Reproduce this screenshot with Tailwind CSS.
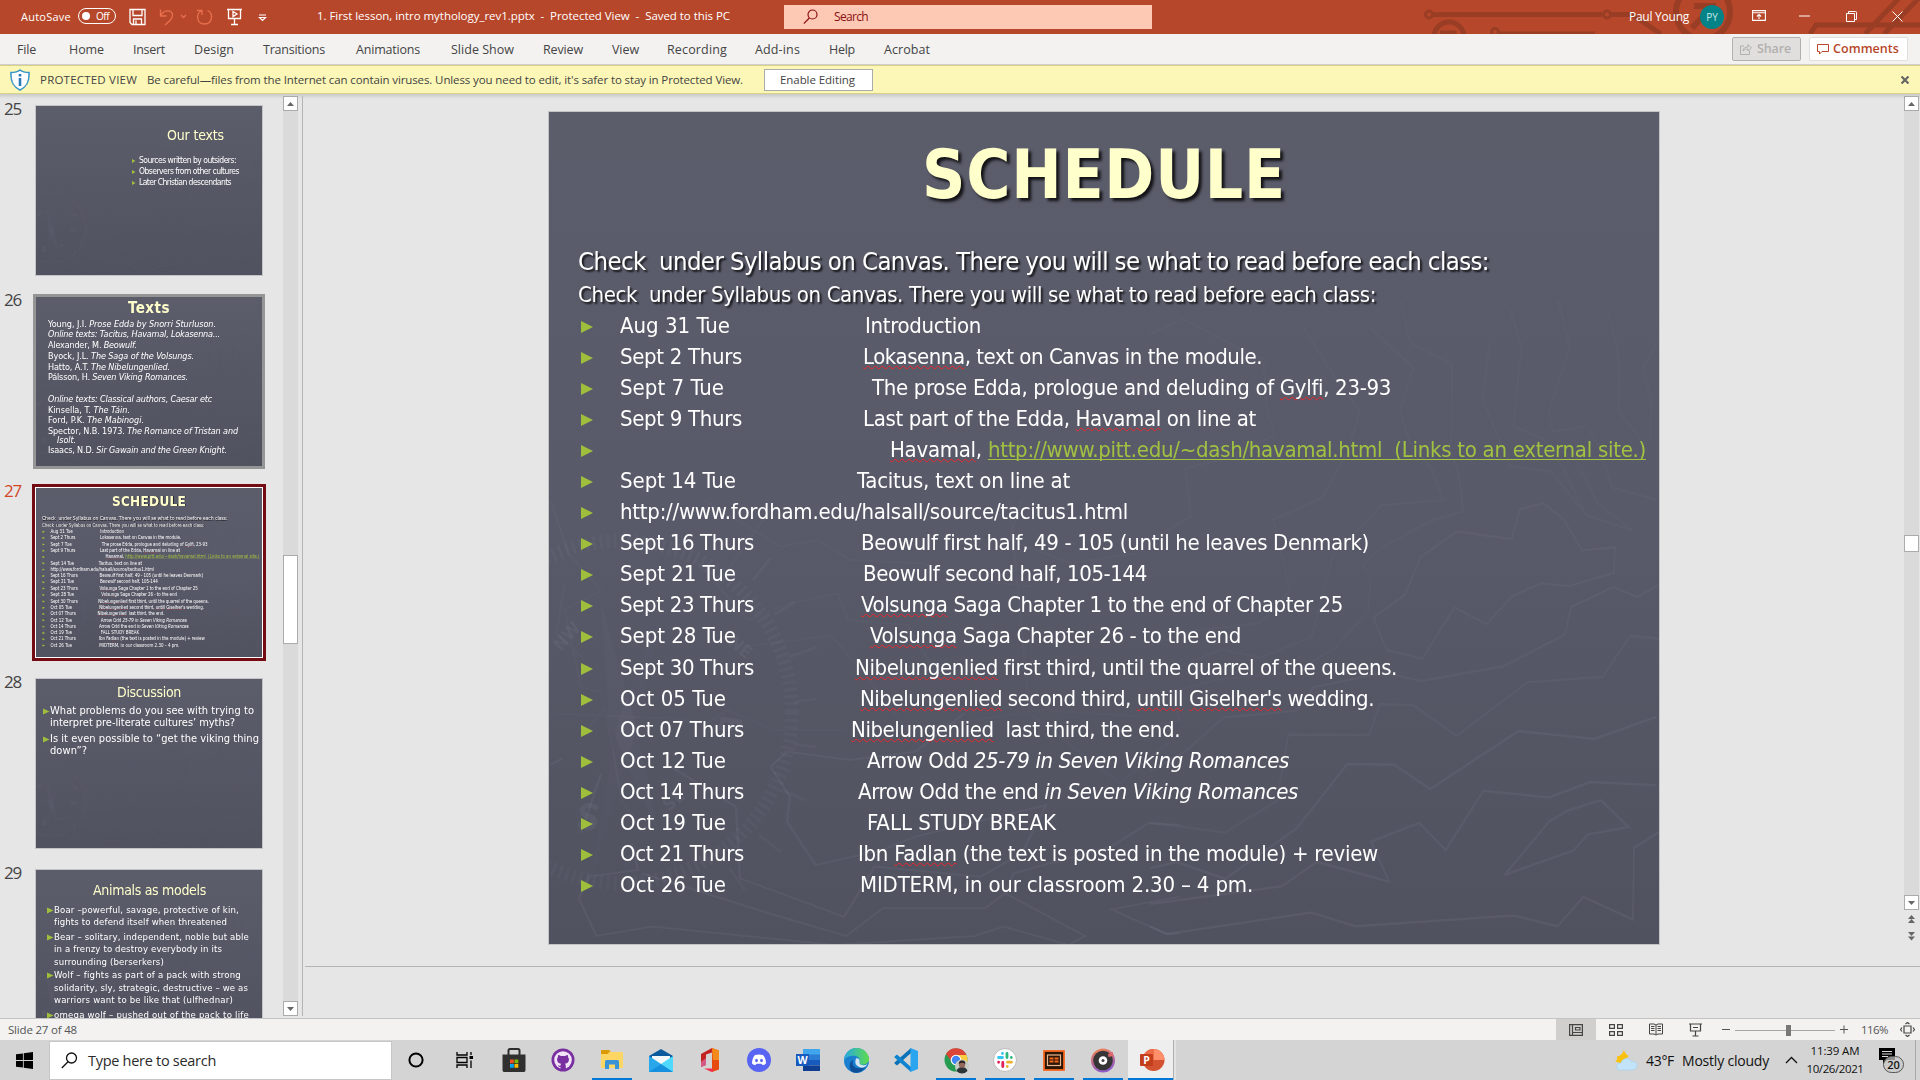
<!DOCTYPE html>
<html lang="en">
<head>
<meta charset="utf-8">
<title>1. First lesson, intro mythology_rev1.pptx</title>
<script src="https://cdn.jsdelivr.net/npm/@tailwindcss/browser@4"></script>
</head>
<body class="w-[1920px] h-[1080px] overflow-hidden flex flex-col bg-[#e6e6e6] font-['Open_Sans','Noto_Sans',sans-serif] text-[12px] text-[#444] whitespace-nowrap">

<!-- shared terrain artwork for every slide -->
<svg class="hidden">
  <symbol id="terrain" viewBox="0 0 1110 832">
    <g fill="none" stroke="#8c8ea4" stroke-width="3" opacity=".62">
      <g transform="translate(601 188) scale(.3333 .4209)" stroke-width="6">
        <g opacity=".1">
        <path d="M0 80L100 45L160 70L300 130L340 140L350 260L375 320L250 370L105 400L122 515L0 570"/>
        <path d="M460 65L560 190L630 265L590 365L515 470L370 522L420 690L330 768L130 785L0 820"/>
        <path d="M660 65L790 160L750 260L780 340L845 400L880 475L695 487L620 550L550 605L485 800L330 850L215 830L0 900"/>
        <path d="M750 0L780 100L905 152L908 300L900 350L928 420L940 502L850 522L700 585L638 630L662 662L655 740L550 830L430 885L220 900L60 930L90 1000L0 1010"/>
        <path d="M1080 20L1115 110L1090 300L1180 330L1240 400L1310 512L1450 548L1345 485L1290 400M1020 100L998 235L1080 395L1205 408L1310 512"/>
        <path d="M1225 0L1260 115L1195 265L1210 312L1310 300L1350 350L1385 445L1520 475M1375 30L1405 120L1408 265L1470 330M1528 90L1480 160L1503 240L1500 330"/>
        </g>
        <g opacity=".15">
        <path d="M710 832L670 755L765 700L812 610L920 550L1085 568L1110 497L1180 483L1240 520L1297 595L1395 587L1392 648L1255 680L1175 673L1087 703L1010 770L913 730L817 852Z"/>
        <path d="M1528 675L1462 706L1390 682L1263 730L1245 795L1060 870L812 905L700 885L490 920L440 975L220 992L110 1070L0 1120"/>
        <path d="M1528 805L1440 798L1358 895L1132 908L920 1036L790 963L690 960L658 1033L415 1032L380 1190L225 1265L0 1242"/>
        </g>
        <g opacity=".22">
        <path d="M1520 990L1333 1043L1105 1024L840 1162L733 1104L592 1102L440 1255L225 1375L80 1335L0 1350"/>
        <path d="M1520 1153L1320 1145L1197 1182L1000 1166L887 1307L807 1242L663 1287L718 1382L500 1335L395 1393L0 1435"/>
        <path d="M1352 1188L1435 1252L1313 1270L1270 1308L1063 1366L1200 1237L1250 1214ZM1528 1263L1452 1302L1449 1472L1300 1418L1222 1488L1090 1462L617 1488L483 1455L50 1506L0 1488"/>
        </g>
      </g>
      <g transform="translate(-9 388) scale(.4082 .3333)" stroke-width="6">
        <g opacity=".1">
        <path d="M25 0L70 160L150 270L60 330L100 560L155 580M400 0L590 140L680 120L760 180L940 190L1060 240L1210 260M380 180L510 360L610 310L730 280L755 360L900 375L980 540"/>
        <path d="M490 440L715 408L820 560L900 690L1230 630L1480 650M300 650L410 670L460 630L570 690L750 690M25 640L300 655M1150 0L1200 640L1420 850L1568 700"/>
        <path d="M430 260L570 20M1180 0L1150 120L1300 190L1460 160M60 250L40 400L110 480M110 700L160 620L200 900L250 1000"/>
        </g>
        <g opacity=".2">
        <path d="M25 795L55 775M605 755L760 780L920 755L1040 640M565 800L612 890L605 965L675 1095L840 1050M565 800L605 755M480 920L490 1135L745 1250L820 1100L1080 1130L1180 1060L1240 915L920 1010L840 1050"/>
        <path d="M250 1120L560 1240L750 1308L840 1225L1090 1225L1140 1180L1335 1308L1295 1335L1135 1280L1065 1308L720 1335L275 1280L138 1308L95 1195L120 1130L240 1110L225 1030"/>
        <path d="M1568 1190L1400 1228L1535 1302L1568 1300M1140 1180L1160 1120L1400 1040L1490 970L1568 975M150 820L100 1000M320 800L480 920"/>
        </g>
      </g>
      <circle cx="72" cy="600" r="171" stroke-width="14" stroke-dasharray="3 4" opacity=".14"/>
      <path d="M225 503L246 490M240 545L268 535M245 590L268 587M244 632L268 635M232 678L256 688M210 723L232 740M180 756L196 778M204 468L222 446" opacity=".14"/>
      <path d="M52 490L84 602L110 722L60 612Z" fill="#8c8ea4" stroke="none" opacity=".1"/>
      <path d="M112 500L90 610L38 780L70 605Z" fill="#8c8ea4" stroke="none" opacity=".06"/>
    </g>
    <g fill="#8c8ea4" opacity=".13" font-family="DejaVu Sans" font-weight="bold">
      <text x="26" y="716" font-size="36" transform="rotate(8 26 716)">S</text>
      <text x="172" y="602" font-size="30" transform="rotate(98 172 602)">E</text>
      <text x="12" y="540" font-size="18" transform="rotate(-48 12 540)">NW</text>
      <text x="120" y="700" font-size="18" transform="rotate(-40 120 700)">SE</text>
      <text x="178" y="532" font-size="18" transform="rotate(40 178 532)">NE</text>
    </g>
  </symbol>
</svg>

<!-- title bar -->
<header class="relative h-[34px] shrink-0 bg-[#b7472a] text-white flex items-center">
  <svg class="absolute right-0 top-0" width="500" height="34" fill="none" stroke="#9a3d25" stroke-width="5">
    <circle cx="9" cy="14.500" r="3.500" stroke-width="3"/><path d="M13 14.500H182"/><circle cx="187" cy="14.500" r="3.500" stroke-width="3"/><path d="M191 14.500H212L241 34"/>
    <circle cx="29" cy="37" r="15"/><path d="M20 33H34V40" /><circle cx="75" cy="32" r="3.500" stroke-width="3"/><path d="M79 34H175"/>
    <circle cx="283" cy="12" r="27" stroke-width="6"/><path d="M274 6H293V26M293 6L272 28" stroke-width="6"/>
    <path d="M390 34L396 25H500M445 34L480 -3M464 34L500 -3"/>
  </svg>
  <div class="relative flex items-center w-full h-full">
    <span class="ml-[21px] w-[50px] text-[11px]"><span data-w="50">AutoSave</span></span>
    <span class="ml-[7px] mb-[2px] w-[38px] h-[16px] rounded-full border border-white flex items-center pl-[3px] gap-[6px] text-[10px]"><i class="size-[8px] rounded-full bg-white"></i><span data-w="13">Off</span></span>
    <svg class="ml-[13px]" width="17" height="18" fill="none" stroke="#fff" stroke-width="1.300"><path d="M1 1.500H16V16.500H3L1 14.500ZM4 2V7.500H13V2M4.500 16V11H12.500V16M7 12.500V16"/></svg>
    <svg class="ml-[13px]" width="28" height="18" fill="none" stroke="#e8704f" stroke-width="1.300"><path d="M1.500 1.500V8H7.500M1.800 7.500C5 1.500 13 1.500 13.500 7C14 11 9 14 6 17M22 7L24.500 9.500L27 7"/></svg>
    <svg class="ml-[9px]" width="18" height="18" fill="none" stroke="#e8704f" stroke-width="1.300"><path d="M1 2.500H6V7M5.500 3C0 5 0 16 8.500 16C17 16 17.500 5 11.500 2.500"/></svg>
    <svg class="ml-[13px]" width="16" height="18" fill="none" stroke="#fff" stroke-width="1.300"><path d="M0 1.500H15M1.500 1.500V10.500H13.500V1.500M7.500 10.500V16.500M4 16.500H11"/><path d="M6 3.500L10 6L6 8.500Z"/></svg>
    <svg class="ml-[15px]" width="9" height="9" fill="none" stroke="#fff" stroke-width="1.200"><path d="M1 2H8M1.500 4.500L4.500 7.500L7.500 4.500Z"/></svg>
    <span class="ml-[50px] mb-[3px] w-[413px] whitespace-pre text-[11.500px]"><span data-w="413">1. First lesson, intro mythology_rev1.pptx  -  Protected View  -  Saved to this PC</span></span>
    <div class="ml-[54px] w-[368px] h-[24px] bg-[#fdc8b4] text-[#8a1111] flex items-center pl-[19px] text-[12px]">
      <svg width="16" height="16" fill="none" stroke="#8a1111" stroke-width="1.200"><circle cx="9.500" cy="5.500" r="4.500"/><path d="M6.300 9L.8 14.700"/></svg>
      <span class="ml-[15px]"><span data-w="34">Search</span></span>
    </div>
    <span class="ml-[477px] w-[60px] text-[12px]"><span data-w="60">Paul Young</span></span>
    <span class="ml-[11px] size-[24px] rounded-full bg-[#038387] text-[#c5e8e6] text-[10px] flex items-center justify-center">PY</span>
    <svg class="ml-[28px] mb-[2px]" width="14" height="12" fill="none" stroke="#fff" stroke-width="1.100"><path d="M.6 .6H13.400V10.400H.6ZM.6 2.800H13.400M7 9V4.500M4.800 6.500L7 4.400L9.200 6.500"/></svg>
    <svg class="ml-[33px] mb-[2px]" width="11" height="2"><path d="M0 1H11" stroke="#fff"/></svg>
    <svg class="ml-[36px] mb-[2px]" width="11" height="11" fill="none" stroke="#fff"><path d="M.5 2.500H8.500V10.500H.5ZM2.500 2.500V.5H9.500C10.300 .5 10.500 .8 10.500 1.500V8.500H8.500"/></svg>
    <svg class="ml-[35px] mb-[2px]" width="11" height="11" stroke="#fff"><path d="M.5 .5L10.500 10.500M10.500 .5L.5 10.500"/></svg>
  </div>
</header>

<!-- ribbon tabs -->
<nav class="h-[31px] shrink-0 bg-[#f3f2f1] border-b border-[#cfcdd0] flex items-center pl-[17px] text-[12.500px]">
  <div class="flex gap-[29px] pt-[2px]">
    <span class="mr-1" data-w="19">File</span><span data-w="35">Home</span><span data-w="32">Insert</span><span data-w="40">Design</span><span class="mr-0.5" data-w="62">Transitions</span><span class="mr-0.5" data-w="64">Animations</span><span data-w="63">Slide Show</span><span data-w="40">Review</span><span class="-mr-px" data-w="27">View</span><span class="-mr-px" data-w="60">Recording</span><span data-w="45">Add-ins</span><span data-w="26">Help</span><span data-w="46">Acrobat</span>
  </div>
  <div class="ml-auto mr-[12px] flex gap-[8px] font-semibold">
    <span class="w-[69px] h-[24px] rounded-[2px] border border-[#b0b0b0] bg-[#e1dfdd] text-[#b1afad] flex items-center pl-[7px]"><svg width="12" height="12" fill="none" stroke="#b1afad" class="mr-[5px]"><path d="M4 3H.5V11.500H9.500V8M3 8C3.500 5 5 4 8 4V1.500L11.500 5L8 8V6C6 6 4.500 6.500 3 8Z"/></svg><span class="pt-px" data-w="34">Share</span></span>
    <span class="w-[99px] h-[24px] rounded-[2px] border border-[#e1dfdd] bg-white text-[#b7472a] flex items-center pl-[7px]"><svg width="12" height="12" fill="none" stroke="#b7472a" class="mr-[4px]"><path d="M.5 1.500H11.500V8.500H5L2.500 11V8.500H.5Z"/></svg><span class="pt-px" data-w="66">Comments</span></span>
  </div>
</nav>

<!-- protected view bar -->
<section class="h-[29px] shrink-0 bg-[#fcf7b6] border-y border-[#d8d384] flex items-center pl-[9px] text-[11.500px]">
  <svg width="22" height="22" viewBox="0 0 22 22"><path d="M11 1C13.500 3 16.500 3.500 20 3.500C20.500 12 18.500 17.500 11 21C3.500 17.500 1.500 12 2 3.500C5.500 3.500 8.500 3 11 1Z" fill="#fff" stroke="#3794c8" stroke-width="1.600"/><path d="M11 5V7.500M11 9V17" stroke="#2a7ab8" stroke-width="2.600"/></svg>
  <span class="ml-[9px] w-[97px] font-medium"><span data-w="97">PROTECTED VIEW</span></span>
  <span class="ml-[10px] w-[596px]"><span data-w="596">Be careful—files from the Internet can contain viruses. Unless you need to edit, it's safer to stay in Protected View.</span></span>
  <span class="ml-[21px] w-[109px] h-[22px] bg-white border border-[#ababab] flex items-center justify-center pr-[2px]"><span data-w="75">Enable Editing</span></span>
  <svg class="ml-auto mr-[11px]" width="8" height="8" stroke="#666" stroke-width="2.200"><path d="M.5 .5L7.500 7.500M7.500 .5L.5 7.500"/></svg>
</section>

<!-- workspace -->
<main class="h-[924px] shrink-0 flex overflow-hidden relative">
  <div class="absolute inset-x-0 top-0 h-[5px] bg-linear-to-b from-[#cbcbcb] to-[#e6e6e6]"></div>
  <aside id="thumbs" class="relative w-[283px] h-full overflow-hidden"></aside>
  <div class="relative w-[20px] h-[920px] mt-[2px] flex border-r border-[#b4b4b4]">
    <div class="w-[15px] flex flex-col bg-[#dadada]">
      <span class="h-[15px] bg-white border border-[#ababab] flex items-center justify-center"><svg width="7" height="4"><path d="M3.500 0L7 4H0Z" fill="#666"/></svg></span>
      <span class="mt-[444px] h-[89px] bg-white border border-[#ababab]"></span>
      <span class="mt-auto h-[15px] bg-white border border-[#ababab] flex items-center justify-center"><svg width="7" height="4"><path d="M3.500 4L7 0H0Z" fill="#666"/></svg></span>
    </div>
  </div>
  <div class="relative flex-1 flex flex-col">
    <div class="h-[872px] flex">
      <div class="pl-[245px] pt-[17px]">
        <div id="stage" class="border border-[#c4c4c8]"></div>
      </div>
      <div class="ml-auto mr-[1px] mt-[2px] w-[15px] flex flex-col">
        <div class="h-[814px] bg-[#dadada] flex flex-col">
          <span class="h-[15px] bg-white border border-[#ababab] flex items-center justify-center"><svg width="7" height="4"><path d="M3.500 0L7 4H0Z" fill="#666"/></svg></span>
          <span class="mt-[424px] h-[17px] bg-white border border-[#ababab]"></span>
          <span class="mt-auto h-[15px] bg-white border border-[#ababab] flex items-center justify-center"><svg width="7" height="4"><path d="M3.500 4L7 0H0Z" fill="#666"/></svg></span>
        </div>
        <svg class="mt-[4px] self-center" width="9" height="28" fill="#666"><path d="M4.500 1L8 5H1ZM4.500 5L8 9H1ZM4.500 22L8 18H1ZM4.500 26.500L8 22.500H1Z"/></svg>
      </div>
    </div>
    <div class="ml-[2px] border-t border-[#b4b4b4]"></div>
  </div>
</main>

<!-- status bar -->
<footer class="h-[22px] shrink-0 bg-[#f3f2f1] border-t border-[#c3c3c3] flex items-center pl-[8px] text-[11.500px] text-[#555]">
  <span data-w="69">Slide 27 of 48</span>
  <div class="ml-auto flex items-center h-full">
    <span class="w-[40px] h-full bg-[#d0cfce] flex items-center justify-center"><svg width="14" height="12" fill="none" stroke="#444" stroke-width="1.200"><path d="M.6 .6H13.400V11.400H.6ZM3.500 .6V11.400M3.500 8.500H13.400M6.500 3.500H11V6H6.500Z"/></svg></span>
    <span class="w-[40px] flex justify-center"><svg width="14" height="12" fill="none" stroke="#444" stroke-width="1.200"><path d="M.6 .6H5.400V4.400H.6ZM8.600 .6H13.400V4.400H8.600ZM.6 7.600H5.400V11.400H.6ZM8.600 7.600H13.400V11.400H8.600Z"/></svg></span>
    <span class="w-[40px] flex justify-center"><svg width="14" height="13" fill="none" stroke="#444"><path d="M.5 1H5L7 2L9 1H13.500V11H9L7 12L5 11H.5ZM7 2V12M2 3.500H5.500M2 5.500H5.500M2 7.500H5.500M8.500 3.500H12M8.500 5.500H12M8.500 7.500H12"/></svg></span>
    <span class="w-[39px] flex justify-center"><svg width="13" height="14" fill="none" stroke="#444" stroke-width="1.200"><path d="M0 1H13M1.500 1V8H11.500V1M4 4.500H9M6.500 8V12.500M3.500 13H9.500"/></svg></span>
    <svg class="ml-[6px]" width="128" height="13" fill="none" stroke="#555"><path d="M1 6.500H9M119 6.500H127M123 2.500V10.500"/><path d="M14 7.500H114" stroke="#a6a6a6"/><path d="M67.500 2V13" stroke="#777" stroke-width="5"/></svg>
    <span class="ml-[12px] w-[27px]"><span data-w="27">116%</span></span>
    <svg class="ml-[12px] mr-[5px]" width="15" height="15" fill="none" stroke="#444" stroke-width="1.200"><path d="M4 4H11V11H4ZM5.500 2L7.500 .5L9.500 2M5.500 13L7.500 14.500L9.500 13M2 5.500L.5 7.500L2 9.500M13 5.500L14.500 7.500L13 9.500"/></svg>
  </div>
</footer>

<!-- taskbar -->
<div class="h-[40px] shrink-0 bg-[#d4d4d4] flex items-center text-[#111]">
  <span class="w-[49px] flex justify-center"><svg width="17" height="17" viewBox="0 0 16 16"><path d="M0 2.200L6.500 1.300V7.600H0ZM7.300 1.200L16 0V7.600H7.300ZM0 8.400H6.500V14.700L0 13.800ZM7.300 8.400H16V16L7.300 14.800Z"/></svg></span>
  <div class="w-[343px] h-[39px] bg-white border border-[#c6c6c6] flex items-center pl-[11px]">
    <svg width="17" height="17" fill="none" stroke="#111" stroke-width="1.300"><circle cx="10.500" cy="6" r="5"/><path d="M7 9.700L.8 16"/></svg>
    <span class="ml-[10px] pt-px text-[14.500px] text-[#2b2b2b]"><span data-w="128">Type here to search</span></span>
  </div>
  <div class="flex items-center h-full -ml-px">
    <span class="w-[49px] flex justify-center"><svg width="16" height="16" fill="none" stroke="#000" stroke-width="2"><circle cx="8" cy="8" r="6.600"/></svg></span>
    <span class="w-[48px] flex justify-center"><svg width="17" height="16" fill="none" stroke="#000" stroke-width="1.300"><path d="M1 0V3H11V0M1 5.500H11V10.500H1ZM1 16V13H11V16M15 0V3M15 8.500V16"/><path d="M13.500 5.500H17" stroke-width="3"/></svg></span>
    <span class="w-[50px] flex justify-center pl-[2px]"><svg width="24" height="24" viewBox="0 0 24 24"><path d="M6.500 7V2.500Q6.500 1 8 1H16Q17.500 1 17.500 2.500V7" fill="none" stroke="#2d2d2d" stroke-width="2"/><path d="M.5 6.500H23.500V22Q23.500 24 22 24H2Q.5 24 .5 22Z" fill="#303030"/><path d="M8 11.500h3.800v3.800h-3.800z" fill="#f25022"/><path d="M12.500 11.500h3.800v3.800h-3.800z" fill="#7fba00"/><path d="M8 16h3.800v3.800h-3.800z" fill="#00a4ef"/><path d="M12.500 16h3.800v3.800h-3.800z" fill="#ffb900"/></svg></span>
    <span class="w-[49px] flex justify-center"><svg width="24" height="24" viewBox="0 0 24 24"><circle cx="12" cy="12" r="11.500" fill="#7a2fa0"/><circle cx="12" cy="12" r="8.800" fill="#f2e4f8"/><path d="M7.200 7Q7.500 6.500 10 8H14Q16.500 6.500 16.800 7L17.200 9.300Q18.500 11 17.700 13.300Q16.800 15.500 14 15.700Q14.800 16.500 14.800 18V21H9.500V19Q7.500 19.300 6.700 17.300Q8.300 18 9.500 17.500L10 15.700Q7.200 15.500 6.300 13.300Q5.500 11 6.800 9.300Z" fill="#7a2fa0"/></svg></span>
    <span class="w-[49px] h-full flex justify-center items-center relative"><svg width="22" height="20" viewBox="0 0 22 20"><path d="M0 1Q0 0 1 0H8L10 2H21Q22 2 22 3V18H0Z" fill="#fdd663"/><path d="M0 1Q0 0 1 0H8L10 2H8L7 4H0Z" fill="#d99a06"/><path d="M4 19V11.500Q4 10 5.500 10H16.500Q18 10 18 11.500V19H14V14.500H8V19Z" fill="#3b92d4"/></svg><i class="absolute bottom-0 h-0.5 w-[40px] bg-[#0078d7]"></i></span>
    <span class="w-[49px] flex justify-center"><svg width="24" height="23" viewBox="0 0 24 23"><path d="M0 7L12 0L24 7V9H0Z" fill="#0b5a9e"/><path d="M3 7H21V14L12 17L3 14Z" fill="#f4f8fb"/><path d="M0 7L24 23H0Z" fill="#28a8ea"/><path d="M24 7L12 15L24 23Z" fill="#50d9ff"/><path d="M0 23L12 15L24 23Z" fill="#1490df"/></svg></span>
    <span class="w-[49px] flex justify-center"><svg width="20" height="24" viewBox="0 0 20 24"><path d="M12 0L19 2.500V21.500L12 24Z" fill="#e64a0e"/><path d="M12 0L19 2.500V12H13Z" fill="#f38b1c"/><path d="M1 6L12 0V4.500L6 6.500V17L1 19Z" fill="#c32222"/><path d="M1 19L6 17V10L1 14Z" fill="#d45a85"/><path d="M4 20.500H13V24L11 23.800Z" fill="#f0304c"/></svg></span>
    <span class="w-[49px] flex justify-center"><svg width="24" height="24" viewBox="0 0 24 24"><circle cx="12" cy="12" r="12" fill="#5865f2"/><path d="M8 7Q12 6 16 7Q19 10.500 19 15.500Q17.500 17 15.500 17L14.500 15.700H9.500L8.500 17Q6.500 17 5 15.500Q5 10.500 8 7Z" fill="#fff"/><ellipse cx="9.500" cy="12.500" rx="1.400" ry="1.700" fill="#5865f2"/><ellipse cx="14.500" cy="12.500" rx="1.400" ry="1.700" fill="#5865f2"/></svg></span>
    <span class="w-[49px] flex justify-center"><svg width="24" height="22" viewBox="0 0 24 22"><path d="M7 0H24V6H7Z" fill="#41a5ee"/><path d="M7 5.500H24V11H7Z" fill="#2b7cd3"/><path d="M7 11H24V16.500H7Z" fill="#185abd"/><path d="M7 16.500H24V22H7Z" fill="#103f91"/><rect y="5" width="13" height="12" fill="#185abd"/><text x="6.500" y="15" font-size="10.500" text-anchor="middle" font-weight="bold" fill="#fff" font-family="Open Sans">W</text></svg></span>
    <span class="w-[49px] flex justify-center"><svg width="25" height="25" viewBox="0 0 24 24"><defs><linearGradient id="eg"><stop stop-color="#28a9e0"/><stop offset="1" stop-color="#5fdc4c"/></linearGradient></defs><circle cx="12" cy="12" r="12" fill="#1b7fd0"/><path d="M.3 10C2 2 9-.5 13 0C20 .5 24 6 24 11C24 14 21 16 18 16C15 16 14 15 15 13.500C16 11 14 7.500 9.500 7.500C5 7.500 1 9 .3 13Z" fill="url(#eg)"/><path d="M9 11C6 17 12 22 20.500 18C18 23 12 25 8 23C4 20 5 13 9 11Z" fill="#0e4f97"/><path d="M11.500 10Q15 9.500 15 13Q14 16 18 16.500Q21 16.500 22.500 15Q20 20 15 18.500Q9 16 11.500 10Z" fill="#d4e6f2"/></svg></span>
    <span class="w-[50px] flex justify-center"><svg width="24" height="24" viewBox="0 0 24 24"><path d="M17 5L3 17.500L.5 15.500V14.500L17 0Z" fill="#0c72b8"/><path d="M17 19L3 6.500L.5 8.500V9.500L17 24Z" fill="#1084cf"/><path d="M16.500 0L24 3V21L16.500 24Z" fill="#2ba5ef"/></svg></span>
    <span class="w-[49px] h-full flex justify-center items-center relative"><svg class="ml-[2px]" width="26" height="27" viewBox="0 0 26 27"><circle cx="12" cy="13" r="11.500" fill="#269c52"/><path d="M2 7A11.500 11.500 0 0 1 22.500 8H12L8 15Z" fill="#db4437"/><path d="M12 8H22.400A11.500 11.500 0 0 1 13 24.500L17 14Z" fill="#ffcd40"/><circle cx="12" cy="13" r="5.300" fill="#fff"/><circle cx="12" cy="13" r="4.200" fill="#4285f4"/><circle cx="18" cy="19.500" r="7" fill="#c8cdc4"/><path d="M12.500 24Q14 20 18 20Q22 20 23.500 24Q18 29 12.500 24Z" fill="#2e3338"/><circle cx="18" cy="17.500" r="3.200" fill="#94685a"/><path d="M14.700 17Q15 13 18 13.500Q21.500 13 21.300 17Q18 14.500 14.700 17" fill="#2a2220"/></svg><i class="absolute bottom-0 h-0.5 w-[40px] bg-[#0078d7]"></i></span>
    <span class="w-[49px] h-full flex justify-center items-center relative"><svg width="24" height="24" viewBox="0 0 24 24" fill="none" stroke-width="2.800" stroke-linecap="round"><circle cx="12" cy="12" r="11.500" fill="#fff" stroke="#bbb" stroke-width="1"/><path d="M5.500 9.500H9.500M9.500 5.500V5.600" stroke="#36c5f0"/><path d="M14 5.500V9.500M18.300 9.500V9.600" stroke="#2eb67d"/><path d="M14.500 14.200H18.500M14.300 18.500V18.600" stroke="#ecb22e"/><path d="M9.800 14.500V18.500M5.600 14.200V14.300" stroke="#e01e5a"/></svg><i class="absolute bottom-0 h-0.5 w-[40px] bg-[#0078d7]"></i></span>
    <span class="w-[49px] h-full flex justify-center items-center relative"><svg width="22" height="21" viewBox="0 0 22 21"><rect x="1" y="1" width="20" height="19" fill="#2b1606" stroke="#f5671f" stroke-width="1.800"/><rect x="4.500" y="5" width="13" height="10.500" fill="none" stroke="#e8b58e" stroke-width="1.200"/><path d="M6.500 7.500H10.500V9.500H6.500ZM11.500 7.500H15.500V9.500H11.500ZM6.500 10.500H10.500V12.500H6.500ZM11.500 10.500H15.500V12.500H11.500Z" fill="#f5671f"/></svg><i class="absolute bottom-0 h-0.5 w-[40px] bg-[#0078d7]"></i></span>
    <span class="w-[49px] h-full flex justify-center items-center relative"><svg width="24" height="25" viewBox="0 0 24 25"><defs><linearGradient id="gr" x2=".3" y2="1"><stop stop-color="#f58a4a"/><stop offset=".5" stop-color="#c56b8a"/><stop offset="1" stop-color="#8f5cc8"/></linearGradient></defs><circle cx="12" cy="12.500" r="12" fill="url(#gr)"/><circle cx="12" cy="12.500" r="9.800" fill="#363636"/><circle cx="12" cy="12.500" r="4.300" fill="#fff"/><circle cx="12" cy="12.500" r="1.500" fill="#444"/><path d="M17 6L22 4V8L17.500 9Z" fill="#e0686a"/></svg><i class="absolute bottom-0 h-0.5 w-[40px] bg-[#0078d7]"></i></span>
    <span class="ml-px w-[45px] h-full bg-[#eeeeee] flex justify-center items-center border-b-2 border-[#0078d7]"><svg class="ml-[3px] mt-[2px]" width="25" height="22" viewBox="0 0 25 22"><circle cx="13.500" cy="11" r="11" fill="#d35230"/><path d="M13.500 0A11 11 0 0 1 24.500 11H13.500Z" fill="#ff8f6b"/><path d="M2.500 11A11 11 0 0 1 13.500 0V11Z" fill="#ed6c47"/><rect y="5" width="13" height="12" rx="1" fill="#c43e1c"/><text x="6.500" y="15" font-size="10.500" text-anchor="middle" font-weight="bold" fill="#fff" font-family="Open Sans">P</text></svg></span>
    <span class="w-[3px] h-full bg-[#e2e2e2] border-l border-[#b0b0b0]"></span>
  </div>
  <div class="ml-auto flex items-center h-full">
    <svg width="23" height="21" viewBox="0 0 23 21"><path d="M9 0Q10 4 14 6L6 13L0 11.500Q3 10 2 6Q6 7 9 0Z" fill="#fbc10e"/><path d="M5 20Q1.500 20 1.500 16.500Q2 13 6 13Q7 8.500 12 8.500Q15.500 9 16.500 11.500Q22 11 22 15.500Q21.500 19.500 18 20Z" fill="#c3e4f8" stroke="#9fd0ee" stroke-width=".6"/></svg>
    <span class="ml-[8px] w-[28px] pt-px text-[14px]"><span data-w="28">43°F</span></span>
    <span class="ml-[8px] w-[87px] pt-px text-[14px]"><span data-w="87">Mostly cloudy</span></span>
    <svg class="ml-[16px]" width="13" height="8" fill="none" stroke="#111" stroke-width="1.300"><path d="M1 7L6.500 1.500L12 7"/></svg>
    <div class="ml-[8px] w-[58px] flex flex-col items-center text-[11.500px] leading-[18px]"><span data-w="49">11:39 AM</span><span data-w="57">10/26/2021</span></div>
    <div class="ml-[14px] relative w-[37px] h-[26px]">
      <svg width="18" height="18" class="absolute left-0 top-0"><path d="M1 1H17V13H9L5 17V13H1Z"/><path d="M4 4.500H14M4 7H14M4 9.500H10" stroke="#ddd"/></svg>
      <span class="absolute left-[5px] top-[9px] w-[21px] h-[17px] rounded-full bg-[#c9c9c9]/70 border border-[#555] text-[11px] font-semibold leading-[15px] text-center">20</span>
    </div>
    <span class="h-full w-[5px] border-l border-[#aaa]"></span>
  </div>
</div>

<script>
const FACE = "font-['DejaVu_Sans_Condensed','DejaVu_Sans',sans-serif] [font-stretch:condensed]";
const bad = t => `<u class="decoration-wavy decoration-[#f0262b] decoration-[1.3px] underline-offset-1 [text-decoration-skip-ink:none]">${t}</u>`;
// date, date width, start of topic, topic width, topic
const rows = [
  ['Aug 31 Tue',110,865,116,'Introduction'],
  ['Sept 2 Thurs',122,863,399,bad('Lokasenna')+', text on Canvas in the module.'],
  ['Sept 7 Tue',104,872,519,'The prose Edda, prologue and deluding of '+bad('Gylfi')+', 23-93'],
  ['Sept 9 Thurs',122,863,393,'Last part of the Edda, '+bad('Havamal')+' on line at'],
  ['',0,890,756,bad('Havamal')+', <u class="text-[#a1c141] underline-offset-2 decoration-1 [text-decoration-skip-ink:none]">http://www.pitt.edu/~dash/havamal.html  (Links to an external site.)</u>'],
  ['Sept 14 Tue',116,857,213,'Tacitus, text on line at'],
  ['http://www.fordham.edu/halsall/source/tacitus1.html',508,1150,0,''],
  ['Sept 16 Thurs',134,861,508,'Beowulf first half, 49 - 105 (until he leaves Denmark)'],
  ['Sept 21 Tue',116,863,284,'Beowulf second half, 105-144'],
  ['Sept 23 Thurs',134,861,482,bad('Volsunga')+' Saga Chapter 1 to the end of Chapter 25'],
  ['Sept 28 Tue',116,870,371,bad('Volsunga')+' Saga Chapter 26 - to the end'],
  ['Sept 30 Thurs',134,855,542,bad('Nibelungenlied')+' first third, until the quarrel of the queens.'],
  ['Oct 05 Tue',106,860,514,bad('Nibelungenlied')+' second third, '+bad('untill')+' '+bad("Giselher's")+' wedding.'],
  ['Oct 07 Thurs',124,851,329,bad('Nibelungenlied')+'  last third, the end.'],
  ['Oct 12 Tue',106,867,422,'Arrow Odd <em>25-79 in Seven Viking Romances</em>'],
  ['Oct 14 Thurs',124,858,440,'Arrow Odd the end <em>in Seven Viking Romances</em>'],
  ['Oct 19 Tue',106,867,189,'FALL STUDY BREAK'],
  ['Oct 21 Thurs',124,858,520,'Ibn '+bad('Fadlan')+' (the text is posted in the module) + review'],
  ['Oct 26 Tue',106,860,393,'MIDTERM, in our classroom 2.30 – 4 pm.']];
const check = 'Check  under Syllabus on Canvas. There you will se what to read before each class:';
const schedule = `<div class="relative w-[1110px] h-[832px] overflow-hidden bg-linear-to-b from-[#5c5d6b] via-[#595a69] to-[#51525f] ${FACE} text-white text-[22px]">
  <svg class="absolute inset-0" width="1110" height="832"><use href="#terrain"/></svg>
  <div class="relative flex flex-col pl-[29px] pt-[23px]">
    <div class="mr-[29px] h-[80px] leading-[80px] text-center text-[67px] font-bold text-[#ffffcc] [text-shadow:3px_3px_3px_#000000cc]"><span data-w="364">SCHEDULE</span></div>
    <div class="mt-[29px] h-[35px] leading-[35px] text-[25.5px] [text-shadow:2px_2px_2px_#000000cc]"><span data-w="911">${check}</span></div>
    <div class="h-[31px] leading-[31px] [text-shadow:2px_2px_2px_#000000cc]"><span data-w="798">${check}</span></div>
    ${rows.map(r=>`<div class="flex items-center h-[31.06px] leading-[31px]"><svg class="mt-[3px] shrink-0" width="42" height="12"><path d="M3 0L15 6L3 12Z" fill="#9fbf3c"/></svg><span class="shrink-0" style="width:${r[2]-620}px">${r[0]?`<span data-w="${r[1]}">${r[0]}</span>`:''}</span>${r[4]?`<span class="shrink-0" data-w="${r[3]}">${r[4]}</span>`:''}</div>`).join('')}
  </div></div>`;
document.getElementById('stage').innerHTML = schedule;

const A='<svg width="7" height="7" class="absolute -left-[7px] top-1/2 -mt-[3px]"><path d="M0 .5L6.500 3.500L0 6.500Z" fill="#9fbf3c"/></svg>';
const a='<svg width="4" height="4" class="absolute -left-[7px] top-1/2 -mt-[1px]"><path d="M0 0L3.500 2L0 4Z" fill="#9fbf3c"/></svg>';
// centre y, x, width, size, html
const decks = {
  25:[[29,131,57,14,'Our texts','t'],[54,103,97,8.5,'Sources written by outsiders:','',a],[65,103,100,8.5,'Observers from other cultures','',a],[76,103,92,8.5,'Later Christian descendants','',a]],
  26:[[11,92,42,15,'<b>Texts</b>','t'],[27,12,168,9,'Young, J.I. <em>Prose Edda by Snorri Sturluson.</em>'],[37,12,172,9,'<em>Online texts: Tacitus, Havamal, Lokasenna...</em>'],[48,12,89,9,'Alexander, M. <em>Beowulf.</em>'],[59,12,146,9,'Byock, J.L. <em>The Saga of the Volsungs.</em>'],[70,12,122,9,'Hatto, A.T. <em>The Nibelungenlied.</em>'],[80,12,140,9,'Pálsson, H. <em>Seven Viking Romances.</em>'],[102,12,164,9,'<em>Online texts: Classical authors, Caesar etc</em>'],[113,12,82,9,'Kinsella, T. <em>The Táin.</em>'],[123,12,96,9,'Ford, P.K. <em>The Mabinogi.</em>'],[134,12,190,9,'Spector, N.B. 1973. <em>The Romance of Tristan and</em>'],[143,21,19,9,'<em>Isolt.</em>'],[153,12,179,9,'Isaacs, N.D. <em>Sir Gawain and the Green Knight.</em>']],
  28:[[13,81,64,14,'Discussion','t'],[32,14,204,11,'What problems do you see with trying to','',A],[44,14,185,11,'interpret pre-literate cultures’ myths?'],[60,14,209,11,'Is it even possible to “get the viking thing','',A],[72,14,37,11,'down”?']],
  29:[[20,57,113,14,'Animals as models','t'],[40,18,185,9.5,'Boar –powerful, savage, protective of kin,','',A],[52,18,173,9.5,'fights to defend itself when threatened'],[67,18,195,9.5,'Bear – solitary, independent, noble but able','',A],[79,18,168,9.5,'in a frenzy to destroy everybody in its'],[92,18,110,9.5,'surrounding (berserkers)'],[105,18,187,9.5,'Wolf – fights as part of a pack with strong','',A],[117.5,18,194,9.5,'solidarity, sly, strategic, destructive – we as'],[130,18,179,9.5,'warriors want to be like that (ulfhednar)'],[144.5,18,195,9.5,'omega wolf – pushed out of the pack to life','',A]]
};
const page = n => {
  if (n == 27) return `<div class="w-[1110px] h-[832px] origin-top-left scale-[0.2036]" data-scale="0.2036">${schedule}</div>`;
  let end = 0;
  return `<svg class="absolute inset-0" width="226" height="169" viewBox="0 0 1110 832" preserveAspectRatio="none"><use href="#terrain" width="1110" height="832"/></svg><div class="relative flex flex-col items-start">` + decks[n].map((l, i) => {
    const top = l[0]-8-end; end = l[0]+8;
    return `<span class="relative h-[16px] leading-[16px] ${l[5]?'text-[#ffffcc]':''}" style="${i?'margin':'padding'}-top:${top}px;margin-left:${l[1]}px;font-size:${l[3]}px${i?'':';height:'+(top+16)+'px'}">${l[6]||''}<span data-w="${l[2]}">${l[4]}</span></span>`;
  }).join('') + '</div>';
};
const ring = {25:'outline-1 outline-[#c4c4c8]',26:'outline-3 outline-[#959595]',27:'outline-3 outline-offset-1 outline-[#750b12] shadow-[0_0_0_1px_#fff]',28:'outline-1 outline-[#c4c4c8]',29:'outline-1 outline-[#c4c4c8]'};
document.getElementById('thumbs').innerHTML = '<div class="flex flex-col pt-[12px] gap-[22px]">' + [25,26,27,28,29].map(n =>
  `<div class="flex h-[169px] shrink-0"><span class="w-[36px] pl-[4px] -mt-[10px] text-[17px] ${n==27?'text-[#d24726]':''}"><span data-w="17">${n}</span></span><div class="relative w-[226px] h-[169px] ${ring[n]} text-white ${FACE}"><div class="relative w-full h-full overflow-hidden bg-linear-to-b from-[#5c5d6b] to-[#51525f]">${page(n)}</div></div></div>`).join('') + '</div>';

// spread each label over its intended width
function fit() {
  const labels = [...document.querySelectorAll('[data-w]')];
  labels.forEach(e => { e.style.display = 'inline-block'; e.style.whiteSpace = 'pre'; e.style.letterSpacing = '0px'; });
  const widths = labels.map(e => {
    const zoomed = e.closest('[data-scale]');
    return e.getBoundingClientRect().width / (zoomed ? +zoomed.dataset.scale : 1);
  });
  labels.forEach((e, i) => { e.style.letterSpacing = ((+e.dataset.w - widths[i]) / e.textContent.length) + 'px'; });
}
fit();
addEventListener('load', () => { fit(); requestAnimationFrame(fit); setTimeout(fit, 50); setTimeout(fit, 300); });
document.fonts.ready.then(fit);
new ResizeObserver(fit).observe(document.getElementById('stage'));
</script>
</body>
</html>
